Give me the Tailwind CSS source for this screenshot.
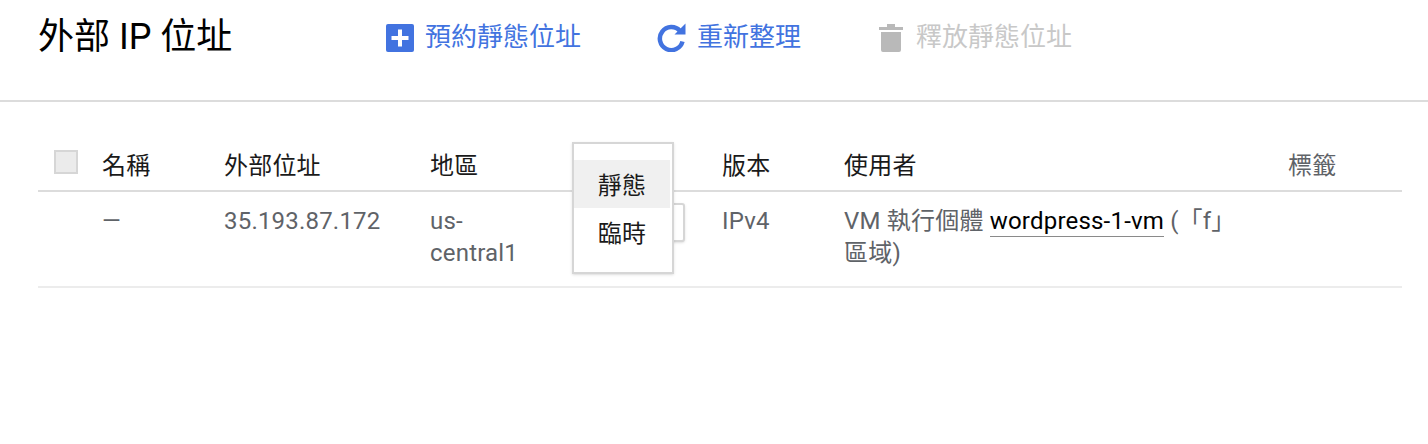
<!DOCTYPE html><html lang="zh-Hant">
<head>
  <meta charset="UTF-8">
  <title>外部 IP 位址</title>
  <script src="https://cdn.jsdelivr.net/npm/@tailwindcss/browser@4"></script>
</head>
<body class="bg-white font-['Roboto','Noto_Sans_CJK_TC',sans-serif] overflow-hidden">
  <div class="h-[102px] border-b-2 border-[#dcdcdc] flex items-start pl-[38px]">
    <h1 class="w-[347px] mt-[15px] text-[36px] leading-[44px] text-black font-normal">外部 IP 位址</h1>
    <button class="flex items-center mt-[22px] h-[30px] text-[#4273e0] text-[26px] leading-[30px]">
      <svg class="w-[30px] h-[30px] mr-[10px]" viewBox="0 0 30 30"><rect x="1" y="2" width="28" height="28" rx="2" fill="#4273e0"/><path d="M15 7.5v17M6.5 16h17" stroke="#fff" stroke-width="4"/></svg>
      預約靜態位址
    </button>
    <button class="flex items-center mt-[22px] ml-[76px] h-[30px] text-[#4273e0] text-[26px] leading-[30px]">
      <svg class="w-[30px] h-[30px] mr-[10px]" viewBox="0 0 30 30"><path d="M23 9A11.5 11.5 0 1 0 25.5 19.5" fill="none" stroke="#4273e0" stroke-width="4.5"/><path d="M17.5 12.5h11v-11z" fill="#4273e0"/></svg>
      重新整理
    </button>
    <button class="flex items-center mt-[22px] ml-[78px] h-[30px] text-[#c8c8c8] text-[26px] leading-[30px]">
      <svg class="w-[24px] h-[30px] mr-[13px]" viewBox="0 0 24 30"><path d="M0 5h8V2h8v3h8v3H0zM2 10h20v18a2 2 0 0 1-2 2H4a2 2 0 0 1-2-2z" fill="#b9b9b9"/></svg>
      釋放靜態位址
    </button>
  </div>

  <div class="relative mx-[38px] mt-[38px] w-[1364px] text-[24px] leading-[32px] tracking-[0.2px] text-[#5f6368] [text-spacing-trim:space-all]">
    <div class="flex h-[52px] border-b-2 border-[#dcdcdc] items-start pt-[10px] text-[#1a1a1a]">
      <div class="w-[64px] pl-[16px]">
        <div class="w-[24px] h-[24px] bg-[#ebebeb] border-2 border-[#d6d6d6]"></div>
      </div>
      <div class="w-[122px]">名稱</div>
      <div class="w-[206px]">外部位址</div>
      <div class="w-[292px]">地區</div>
      <div class="w-[122px]">版本</div>
      <div class="w-[444px]">使用者</div>
      <div class="text-[#5f6368]">標籤</div>
    </div>
    <div class="flex h-[96px] border-b-2 border-[#ececec] items-start pt-[13px]">
      <div class="w-[64px]"></div>
      <div class="w-[122px]">—</div>
      <div class="w-[206px]">35.193.87.172</div>
      <div class="w-[292px]"><div class="w-[100px]">us-<br>central1</div></div>
      <div class="w-[122px]">IPv4</div>
      <div class="w-[400px]">VM 執行個體 <a class="text-black border-b border-[#8a8a8a] pb-px">wordpress-1-vm</a> (「f」<br>區域)</div>
    </div>

    <!-- select button behind the open menu -->
    <div class="absolute left-[540px] top-[63px] w-[107px] h-[39px] bg-white rounded-[3px] border-2 border-[#d6d6d6] shadow-sm"></div>
    <div class="absolute left-[534px] top-[2px] w-[102px] h-[132px] bg-white border-2 border-[#d6d6d6] shadow-sm pt-[16px] text-[#1a1a1a] text-center">
      <div class="h-[48px] leading-[52px] bg-[#f0f0f0] mr-[2px]">靜態</div>
      <div class="h-[48px] leading-[52px] mr-[2px]">臨時</div>
    </div>
  </div>
</body>
</html>
